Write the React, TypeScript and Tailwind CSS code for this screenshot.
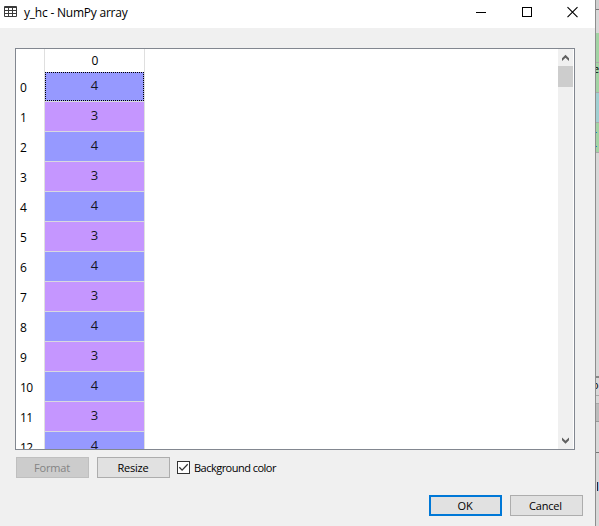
import React from "react";

const values = [4, 3, 4, 3, 4, 3, 4, 3, 4, 3, 4, 3, 4];

function TitleBar() {
  return (
    <header className="flex h-7 shrink-0 items-start bg-white">
      <svg className="ml-1 mt-[6px] shrink-0" width="13" height="11" viewBox="0 0 13 11">
        <rect width="13" height="11" rx="1" fill="#3a3a3a" />
        <g fill="#fff">
          {[2, 5, 8].map((y) =>
            [1, 5, 9].map((x) => <rect key={`${x}-${y}`} x={x} y={y} width="3" height="2" />)
          )}
        </g>
      </svg>
      <h1 className="ml-[7px] mt-[5px] whitespace-nowrap text-[12px] leading-4 tracking-[-0.22px]">y_hc - NumPy array</h1>
      <div className="ml-auto mr-[17px] mt-[6px] flex gap-[35px]">
        <svg width="11" height="12" viewBox="0 0 11 12" shapeRendering="crispEdges">
          <path d="M0 6.5h10" stroke="#000" />
        </svg>
        <svg width="10" height="12" viewBox="0 0 10 12" shapeRendering="crispEdges">
          <rect x=".5" y="1.5" width="9" height="9" fill="none" stroke="#000" />
        </svg>
        <svg width="11" height="12" viewBox="0 0 11 12">
          <path d="M.5 1.2l10 10M10.5 1.2l-10 10" stroke="#000" strokeWidth="1.1" />
        </svg>
      </div>
    </header>
  );
}

function ArrayTable() {
  return (
    <main className="ml-[15px] mt-5 flex h-[402px] w-[560px] shrink-0 overflow-hidden border border-[#828790] bg-white pr-px">
      <div className="w-7 shrink-0 pt-[23px]">
        {values.map((_, i) => (
          <div key={i} className="h-[30px] pl-1 pt-px text-[12px] leading-[30px] tracking-[-0.7px]">{i}</div>
        ))}
      </div>
      <div className="w-[101px] shrink-0 border-x border-[#dfdfdf]">
        <div className="h-[23px] pl-px text-center text-[12px] leading-[23px]">0</div>
        {values.map((v, i) => (
          <div
            key={i}
            className={`h-[30px] border-b border-[#d8d8e0] text-center text-[13px] leading-[26px] text-[#15151f] ${v === 4 ? "bg-[#9699ff]" : "bg-[#c596ff]"}`}
          >
            {i === 0 ? <div className="h-[29px] border border-dotted border-black leading-[24px]">{v}</div> : v}
          </div>
        ))}
      </div>
      <div className="ml-auto flex w-[15px] flex-col bg-[#f0f0f0]">
        <svg width="15" height="17" viewBox="0 0 15 17">
          <path d="M4 12V9.3L7.5 5.8 11 9.3V12L7.5 8.7z" fill="#606060" />
        </svg>
        <div className="h-[21px] bg-[#cdcdcd]" />
        <svg className="mt-auto" width="15" height="17" viewBox="0 0 15 17">
          <path d="M4 5.5v2.7l3.5 3.5L11 8.2V5.5L7.5 8.8z" fill="#606060" />
        </svg>
      </div>
    </main>
  );
}

const button = "flex h-[21px] w-[73px] items-center justify-center border text-[11px] leading-none tracking-[-0.2px]";

function Behind() {
  return (
    <aside className="flex w-[3px] shrink-0 flex-col overflow-hidden bg-[#d8d8d8] text-[11px] leading-none">
      <div className="h-[10px] shrink-0 border-b border-[#777] bg-[#cfcfcf]" />
      <div className="h-[23px] shrink-0" />
      <div className="h-[30px] shrink-0 border-b border-[#aaa] bg-[#a2d3a4]" />
      <div className="h-[30px] shrink-0 border-b border-[#aaa] bg-[#a2d3a4]"><span className="-ml-[3px]">e</span></div>
      <div className="h-[30px] shrink-0 border-b border-[#aaa] bg-[#a0cfd2]" />
      <div className="h-[30px] shrink-0 border-b border-[#aaa] bg-[#a2d3a4] pt-[9px]">
        <div className="size-px bg-[#1684bd]" />
        <div className="mt-[13px] size-px bg-[#1684bd]" />
      </div>
      <div className="h-[225px] shrink-0 border-b-2 border-[#888]" />
      <div className="h-[18px] shrink-0 border-b border-[#aaa] pt-px"><span className="-ml-[4px]">o</span></div>
      <div className="h-2 shrink-0 border-b border-[#aaa]" />
      <div className="h-[18px] shrink-0 border-b border-[#999] bg-[#bcbcbc]" />
      <div className="h-[31px] shrink-0 border-b border-[#777]" />
      <div className="ml-px mt-[29px] flex h-[9px] shrink-0">
        <div className="w-px bg-[#302040]" />
        <div className="w-px bg-[#83c5ee]" />
      </div>
    </aside>
  );
}

export default function App() {
  return (
    <div className="flex h-[526px] w-[599px] overflow-hidden font-['Open_Sans','Noto_Sans',sans-serif] text-black">
      <div className="flex w-[596px] shrink-0 flex-col border-r border-[#8e8e8e] bg-[#f0f0f0]">
        <TitleBar />
        <ArrayTable />
        <div className="ml-4 mt-[7px] flex h-[21px] shrink-0 items-center">
          <button className={`${button} border-[#bfbfbf] bg-[#cccccc] pr-px text-[#838383]`}>Format</button>
          <button className={`${button} ml-2 border-[#adadad] bg-[#e1e1e1] pr-px`}>Resize</button>
          <label className="ml-[7px] flex items-center">
            <svg width="13" height="13" viewBox="0 0 13 13">
              <rect x=".5" y=".5" width="12" height="12" fill="#fff" stroke="#333" />
              <path d="M2.3 6.2l2.8 2.9 5.6-5.8" fill="none" stroke="#333" strokeWidth="1.3" />
            </svg>
            <span className="ml-1 whitespace-nowrap text-[11px] leading-[15px] tracking-[-0.52px]">Background color</span>
          </label>
        </div>
        <div className="mr-3 mt-[17px] flex shrink-0 justify-end gap-2">
          <button className={`${button} border-2 border-[#0078d7] bg-[#e1e1e1] pr-px`}>OK</button>
          <button className={`${button} border-[#adadad] bg-[#e1e1e1] pr-[2px]`}>Cancel</button>
        </div>
      </div>
      <Behind />
    </div>
  );
}
